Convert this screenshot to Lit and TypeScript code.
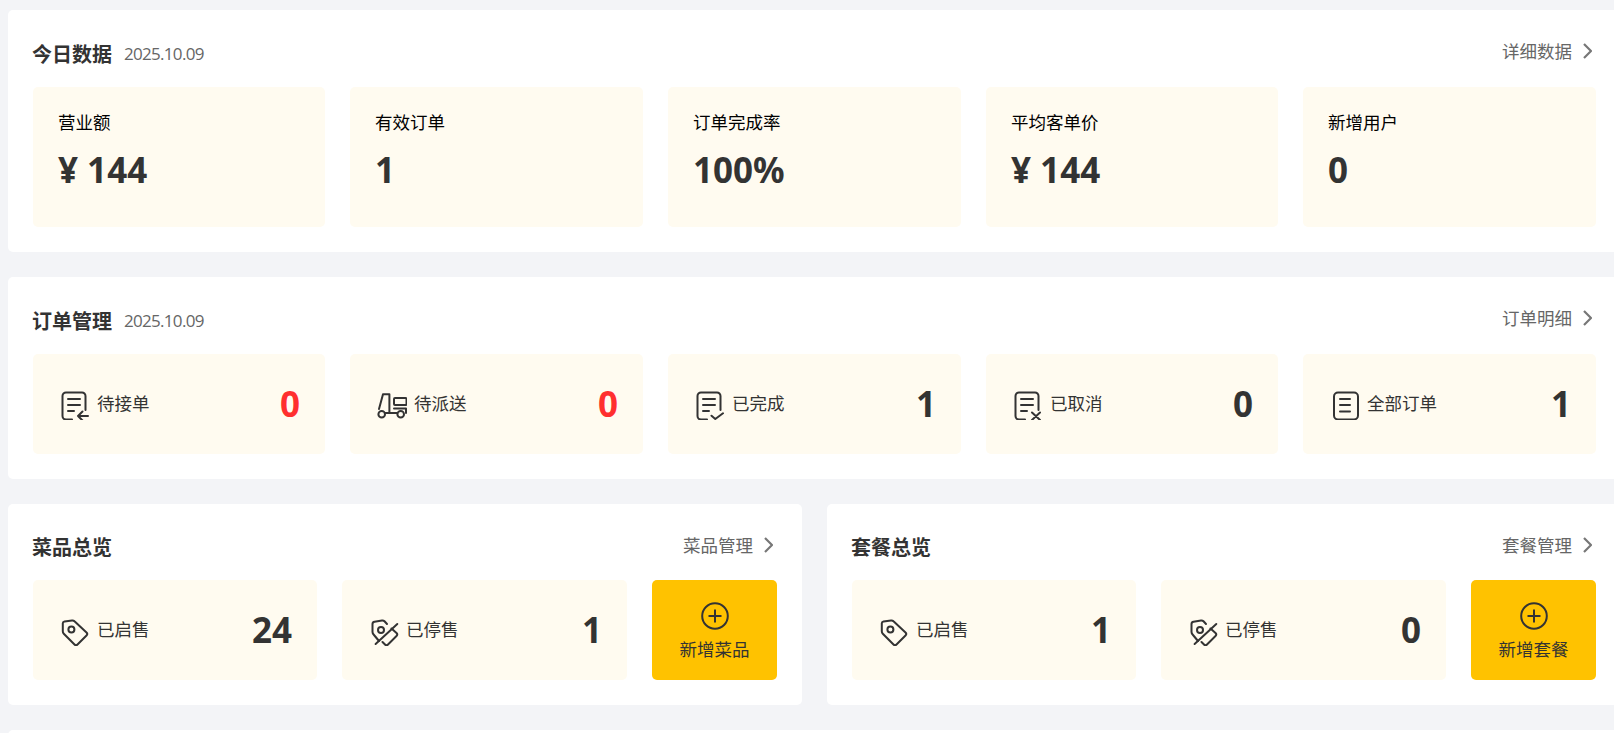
import { LitElement, html, css, svg } from "lit";
import { customElement } from "lit/decorators.js";

const docFrame = svg`<path d="M14 31.5H8a3.5 3.5 0 0 1-3.5-3.5V8A3.5 3.5 0 0 1 8 4.500H24A3.500 3.500 0 0 1 27.500 8V22"/>`;
const docLines = svg`<path d="M10 11H22M10 17H22M10 23H16"/>`;
const tagShape = svg`<path d="M6.500 7.500L14 6.500q1.500-.2 2.500.8L28.500 18.500q1.500 1.500 0 3L19.500 30.500q-1.500 1.500-3 0L5.800 19.800q-1-1-1-2.500L4.800 9.300q0-1.500 1.700-1.800Z"/><circle cx="13.400" cy="15.500" r="3"/>`;

const icons: Record<string, unknown> = {
  waiting: svg`${docFrame}${docLines}<path d="M20 28H30M24.500 23.500L20 28L24.500 32.500"/>`,
  delivery: svg`<path d="M8 6.300H14.400V24M8 6.300L4 21"/><circle cx="6.700" cy="26.300" r="3.300"/><circle cx="25.700" cy="26.300" r="3.300"/><path d="M10 25H22"/><rect x="19" y="10" width="12.500" height="7" rx="1"/><path d="M19 20.500H31V25"/>`,
  done: svg`${docFrame}${docLines}<path d="M18.500 27.700L22.300 31L30 25.300"/>`,
  cancel: svg`${docFrame}${docLines}<path d="M21 24.500L29 32M29 24.500L21 32"/>`,
  all: svg`<rect x="6" y="4.500" width="24" height="27" rx="4"/><path d="M12 11H22M12 17H22M12 23.500H22"/>`,
  tag: tagShape,
  tagOff: svg`<path d="M12 27L7 21q-1.500-1.500-1.500-3V10q0-2 2-2.300L15 6.500q1.500-.2 2.500.8L20 10"/><path d="M24.500 14.500L29.500 19q1.500 1.500 0 3L21 30.500q-1.500 1.500-3 0L15.500 28"/><circle cx="14" cy="16" r="3"/><path d="M30.300 10L8.600 30"/>`,
};

const icon = (name: string) =>
  html`<svg class="icon" viewBox="0 0 32 32">${icons[name]}</svg>`;

const today = [
  { label: "营业额", value: "¥ 144" },
  { label: "有效订单", value: "1" },
  { label: "订单完成率", value: "100%" },
  { label: "平均客单价", value: "¥ 144" },
  { label: "新增用户", value: "0" },
];

const orders = [
  { icon: "waiting", label: "待接单", value: "0", alert: true },
  { icon: "delivery", label: "待派送", value: "0", alert: true },
  { icon: "done", label: "已完成", value: "1" },
  { icon: "cancel", label: "已取消", value: "0" },
  { icon: "all", label: "全部订单", value: "1" },
];

const overviews = [
  { title: "菜品总览", link: "菜品管理", on: "24", off: "1", add: "新增菜品" },
  { title: "套餐总览", link: "套餐管理", on: "1", off: "0", add: "新增套餐" },
];

@customElement("app-root")
export class AppRoot extends LitElement {
  header(title: string, link: string, date = "") {
    return html`
      <header class="head">
        <div class="title-wrap">
          <h2>${title}</h2>
          ${date ? html`<span class="date">${date}</span>` : ""}
        </div>
        <a class="link">
          ${link}
          <svg class="chevron" viewBox="0 0 9 16"><path d="M1 1L8 8L1 15" /></svg>
        </a>
      </header>
    `;
  }

  stat(item: { icon: string; label: string; value: string; alert?: boolean }) {
    return html`
      <div class="card stat">
        ${icon(item.icon)}
        <span class="stat-label">${item.label}</span>
        <b class="num ${item.alert ? "alert" : ""}">${item.value}</b>
      </div>
    `;
  }

  render() {
    return html`
      <main class="page">
        <section class="panel">
          ${this.header("今日数据", "详细数据", "2025.10.09")}
          <div class="five">
            ${today.map(
              (t) => html`
                <div class="card today">
                  <span class="today-label">${t.label}</span>
                  <b class="num">${t.value}</b>
                </div>
              `
            )}
          </div>
        </section>

        <section class="panel">
          ${this.header("订单管理", "订单明细", "2025.10.09")}
          <div class="five">${orders.map((o) => this.stat(o))}</div>
        </section>

        <div class="split">
          ${overviews.map(
            (o) => html`
              <section class="panel">
                ${this.header(o.title, o.link)}
                <div class="three">
                  ${this.stat({ icon: "tag", label: "已启售", value: o.on })}
                  ${this.stat({ icon: "tagOff", label: "已停售", value: o.off })}
                  <button class="add">
                    <svg class="plus" viewBox="0 0 28 28">
                      <circle cx="14" cy="14" r="12.800" />
                      <path d="M14 7.500V20.500M7.500 14H20.500" />
                    </svg>
                    ${o.add}
                  </button>
                </div>
              </section>
            `
          )}
        </div>

        <section class="panel rest"></section>
      </main>
    `;
  }

  static styles = css`
    :host {
      display: block;
      height: 733px;
      overflow: hidden;
      background: #f3f4f7;
      color: #333;
      font-family: "Noto Sans CJK SC", "Liberation Sans", sans-serif;
    }
    .page {
      width: 1621px;
      padding: 10px 0 0 8px;
      box-sizing: border-box;
      display: flex;
      flex-direction: column;
      gap: 25px;
    }
    .panel {
      background: #fff;
      border-radius: 5px;
      padding: 0 25px 25px;
    }
    .rest {
      height: 200px;
    }
    .head {
      height: 77px;
      display: flex;
      justify-content: space-between;
      align-items: center;
      padding-top: 10px;
      box-sizing: border-box;
    }
    .split .head {
      height: 76px;
    }
    .title-wrap {
      display: flex;
      align-items: center;
      gap: 12px;
    }
    h2 {
      margin: 0 0 0 -1px;
      font-size: 20px;
      line-height: 28px;
      font-weight: 700;
      color: #333;
    }
    .date {
      font-family: "Open Sans", "Noto Sans CJK SC", sans-serif;
      font-size: 17px;
      letter-spacing: -0.7px;
      color: #666;
    }
    .link {
      display: flex;
      align-items: center;
      gap: 11px;
      margin: -5px 4px 0 0;
      font-size: 17.5px;
      line-height: 24px;
      color: #666;
    }
    .chevron {
      width: 9px;
      height: 16px;
      fill: none;
      stroke: #777;
      stroke-width: 2.200;
    }
    .five {
      display: grid;
      grid-template-columns: 292fr 293fr 293fr 292fr 293fr;
      gap: 25px;
    }
    .three {
      display: grid;
      grid-template-columns: 284fr 285fr 125px;
      gap: 25px;
    }
    .split {
      display: grid;
      grid-template-columns: 1fr 1fr;
      gap: 25px;
    }
    .card {
      background: #fffbf0;
      border-radius: 5px;
      box-sizing: border-box;
      padding: 0 25px;
    }
    .today {
      height: 140px;
      display: flex;
      flex-direction: column;
      padding-top: 21px;
    }
    .today-label {
      font-size: 17.5px;
      line-height: 28px;
      color: #000;
    }
    .today .num {
      margin-top: 9px;
    }
    .num {
      font-family: "Noto Sans", "Liberation Sans", sans-serif;
      font-size: 35px;
      line-height: 50px;
      font-weight: 700;
      color: #333;
    }
    .alert {
      color: #ff2f2f;
    }
    .stat {
      height: 100px;
      display: flex;
      align-items: center;
      gap: 7px;
    }
    .stat-label {
      flex: 1;
      font-size: 17.5px;
      line-height: 24px;
      margin-top: -2px;
      color: #333;
    }
    .icon {
      width: 32px;
      height: 32px;
      flex: none;
      fill: none;
      stroke: #333;
      stroke-width: 2;
      stroke-linecap: round;
      stroke-linejoin: round;
    }
    .add {
      height: 100px;
      border: 0;
      border-radius: 5px;
      background: #ffc200;
      padding: 0;
      display: flex;
      flex-direction: column;
      align-items: center;
      gap: 7px;
      padding-top: 22px;
      box-sizing: border-box;
      font: inherit;
      font-size: 17.5px;
      line-height: 24px;
      color: #333;
    }
    .plus {
      width: 28px;
      height: 28px;
      fill: none;
      stroke: #333;
      stroke-width: 2;
    }
  `;
}
